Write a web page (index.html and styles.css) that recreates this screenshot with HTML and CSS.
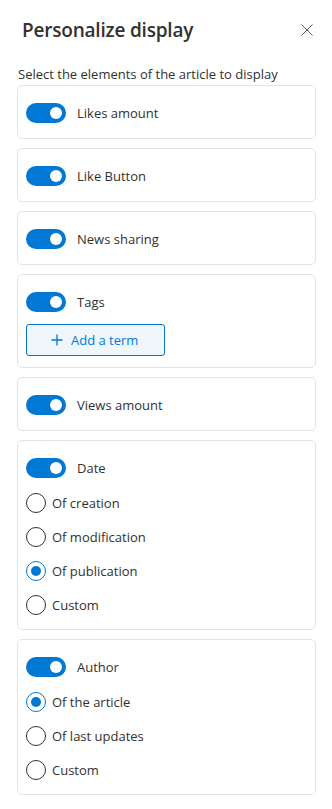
FILE: index.html
```html
<!DOCTYPE html>
<html lang="en">

<head>
    <meta charset="UTF-8">
    <meta name="viewport" content="width=device-width, initial-scale=1.0">
    <title>Personalize display</title>
    <link rel="stylesheet" href="styles.css">
</head>

<body>
    <div class="panel">
        <div class="panel-header">
            <h1>Personalize display</h1>
            <button class="close-btn" aria-label="Close">
                <svg width="12" height="12" viewBox="0 0 12 12">
                    <path d="M0.5 0.5 L11.5 11.5 M11.5 0.5 L0.5 11.5" stroke="#605e5c" stroke-width="1" fill="none" />
                </svg>
            </button>
        </div>

        <div class="panel-body">
            <p class="hint">Select the elements of the article to display</p>

            <div class="card">
                <label class="toggle-row">
                    <span class="toggle on"><span class="thumb"></span></span>
                    <span class="toggle-label">Likes amount</span>
                </label>
            </div>

            <div class="card">
                <label class="toggle-row">
                    <span class="toggle on"><span class="thumb"></span></span>
                    <span class="toggle-label">Like Button</span>
                </label>
            </div>

            <div class="card">
                <label class="toggle-row">
                    <span class="toggle on"><span class="thumb"></span></span>
                    <span class="toggle-label">News sharing</span>
                </label>
            </div>

            <div class="card card-tags">
                <label class="toggle-row">
                    <span class="toggle on"><span class="thumb"></span></span>
                    <span class="toggle-label">Tags</span>
                </label>
                <button class="add-btn">
                    <svg width="12" height="12" viewBox="0 0 12 12">
                        <path d="M6 0.5 V11.5 M0.5 6 H11.5" stroke="#0078d4" stroke-width="1.3" fill="none" />
                    </svg>
                    <span>Add a term</span>
                </button>
            </div>

            <div class="card">
                <label class="toggle-row">
                    <span class="toggle on"><span class="thumb"></span></span>
                    <span class="toggle-label">Views amount</span>
                </label>
            </div>

            <div class="card card-options">
                <label class="toggle-row">
                    <span class="toggle on"><span class="thumb"></span></span>
                    <span class="toggle-label">Date</span>
                </label>
                <div class="radio-group">
                    <label class="radio-row"><span class="radio"></span>Of creation</label>
                    <label class="radio-row"><span class="radio"></span>Of modification</label>
                    <label class="radio-row"><span class="radio checked"></span>Of publication</label>
                    <label class="radio-row"><span class="radio"></span>Custom</label>
                </div>
            </div>

            <div class="card card-options">
                <label class="toggle-row">
                    <span class="toggle on"><span class="thumb"></span></span>
                    <span class="toggle-label">Author</span>
                </label>
                <div class="radio-group">
                    <label class="radio-row"><span class="radio checked"></span>Of the article</label>
                    <label class="radio-row"><span class="radio"></span>Of last updates</label>
                    <label class="radio-row"><span class="radio"></span>Custom</label>
                </div>
            </div>
        </div>
    </div>
</body>

</html>
```

FILE: styles.css
```css
body {
    margin: 0;
    padding: 0;
    background-color: #ffffff;
    font-family: 'Open Sans', 'Noto Sans', sans-serif;
    color: #323130;
}

.panel {
    width: 332px;
}

.panel-header {
    display: flex;
    justify-content: space-between;
    align-items: center;
    height: 30px;
    padding: 15px 18px 0 22px;
}

h1 {
    margin: 0;
    font-size: 19px;
    font-weight: 600;
    color: #323130;
    letter-spacing: -0.2px;
}

.close-btn {
    background: transparent;
    border: none;
    padding: 0;
    margin-top: -1px;
    width: 14px;
    height: 14px;
    display: flex;
    align-items: center;
    justify-content: center;
    cursor: pointer;
}

.panel-body {
    padding: 0 16px 14px 17px;
}

.hint {
    margin: 21px 0 3px 1px;
    font-size: 13px;
    line-height: 16px;
    color: #323130;
}

.card {
    border: 1px solid #e6e4e2;
    border-radius: 5px;
    padding: 12px 8px 10px 8px;
    margin-bottom: 9px;
    background-color: #ffffff;
}

.card-tags {
    padding-bottom: 11px;
}

.card-options {
    padding-bottom: 7px;
}

.toggle-row {
    display: flex;
    align-items: center;
    height: 30px;
    cursor: pointer;
}

.toggle {
    display: flex;
    align-items: center;
    box-sizing: border-box;
    width: 40px;
    height: 20px;
    border-radius: 10px;
    background-color: #0078d4;
    padding: 0 4px;
    flex-shrink: 0;
}

.toggle.on {
    justify-content: flex-end;
}

.thumb {
    width: 12px;
    height: 12px;
    border-radius: 50%;
    background-color: #ffffff;
}

.toggle-label {
    margin-left: 11px;
    font-size: 13px;
}

.add-btn {
    display: flex;
    align-items: center;
    margin-top: 7px;
    height: 32px;
    width: 139px;
    box-sizing: border-box;
    padding: 0 0 0 24px;
    border: 1px solid #0078d4;
    border-radius: 3px;
    background-color: #eff6fc;
    color: #0078d4;
    font-family: inherit;
    font-size: 13px;
    cursor: pointer;
}

.add-btn span {
    margin-left: 8px;
}

.radio-group {
    margin-top: 3px;
}

.radio-row {
    display: flex;
    align-items: center;
    height: 34px;
    font-size: 13px;
    cursor: pointer;
}

.radio {
    box-sizing: border-box;
    width: 20px;
    height: 20px;
    border: 1px solid #323130;
    border-radius: 50%;
    margin-right: 6px;
    display: flex;
    align-items: center;
    justify-content: center;
    flex-shrink: 0;
}

.radio.checked {
    border-color: #0078d4;
}

.radio.checked::after {
    content: '';
    width: 10px;
    height: 10px;
    border-radius: 50%;
    background-color: #0078d4;
}
```
